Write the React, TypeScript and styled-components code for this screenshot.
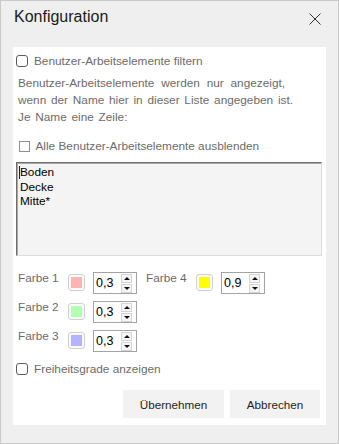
import React from 'react';
import styled, { createGlobalStyle } from 'styled-components';

const GlobalStyle = createGlobalStyle`
  html, body {
    margin: 0;
    padding: 0;
    background: #efefef;
  }
  body {
    font-family: "Liberation Sans", Arial, sans-serif;
  }
  * {
    box-sizing: border-box;
  }
`;

const Window = styled.div`
  width: 339px;
  height: 444px;
  border: 1px solid #c9c9c9;
  background: #efefef;
  display: flex;
  flex-direction: column;
`;

const TitleBar = styled.div`
  height: 46px;
  display: flex;
  align-items: flex-start;
  justify-content: space-between;
  padding: 7px 17px 0 13px;
`;

const Title = styled.div`
  font-size: 16px;
  line-height: 18px;
  color: #1b1b1b;
`;

const CloseButton = styled.div`
  margin-top: 5px;
  width: 12px;
  height: 12px;
  display: flex;
`;

const Panel = styled.div`
  margin: 0 12px;
  height: 378px;
  background: #ffffff;
  display: flex;
  flex-direction: column;
  padding: 0 4px 0 3px;
  font-size: 11.8px;
  color: #6b6b6b;
`;

const CheckRow = styled.label<{ $top: number; $indent?: number }>`
  display: flex;
  align-items: center;
  height: 14px;
  margin-top: ${({ $top }) => $top}px;
  padding-left: ${({ $indent }) => $indent ?? 0}px;
  gap: 6px;
  line-height: 14px;
  white-space: nowrap;
`;

const CheckBox = styled.span<{ $flat?: boolean }>`
  flex: none;
  width: ${({ $flat }) => ($flat ? 11 : 12)}px;
  height: ${({ $flat }) => ($flat ? 11 : 12)}px;
  border: 1px solid ${({ $flat }) => ($flat ? '#8e8e8e' : '#5c5c5c')};
  border-radius: ${({ $flat }) => ($flat ? 0 : 3)}px;
  background: #ffffff;
`;

const Hint = styled.div`
  margin: 6.5px 0 0 2px;
  line-height: 17.35px;
`;

const HintLine = styled.div<{ $justify?: boolean }>`
  white-space: nowrap;
  width: ${({ $justify }) => ($justify ? '267px' : 'auto')};
  text-align: ${({ $justify }) => ($justify ? 'justify' : 'left')};
  text-align-last: ${({ $justify }) => ($justify ? 'justify' : 'left')};
  word-spacing: 1.5px;
`;

const NameList = styled.div`
  margin-top: 9px;
  height: 94px;
  background: #f4f4f4;
  border: 1px solid;
  border-color: #6f6f6f #dcdcdc #dcdcdc #6f6f6f;
  box-shadow: inset 1px 1px 0 #a9a9a9;
  padding: 2px 3px;
  font-size: 11.8px;
  line-height: 14.7px;
  color: #000000;
`;

const ListLine = styled.div`
  position: relative;
`;

const Caret = styled.span`
  position: absolute;
  left: -1px;
  top: 1px;
  width: 1px;
  height: 13px;
  background: #1a1a4a;
`;

const Colors = styled.div`
  margin-top: 16px;
  padding-left: 2px;
  display: flex;
  flex-direction: column;
  gap: 7px;
`;

const ColorRow = styled.div`
  display: flex;
  gap: 9px;
`;

const ColorField = styled.div`
  display: flex;
  align-items: center;
  height: 22px;
`;

const ColorLabel = styled.span`
  align-self: flex-start;
  width: 50px;
  line-height: 13px;
  white-space: nowrap;
`;

const Swatch = styled.span<{ $color: string }>`
  width: 17px;
  height: 17px;
  margin-top: -1px;
  border: 1px solid #d0d0d0;
  border-radius: 3px;
  background: #fbfbfb;
  display: flex;
  align-items: center;
  justify-content: center;

  &::after {
    content: '';
    width: 11px;
    height: 11px;
    background: ${({ $color }) => $color};
  }
`;

const Spinner = styled.div`
  margin-left: 8px;
  width: 44px;
  height: 22px;
  border: 1px solid #a3a3a3;
  background: #ffffff;
  display: flex;
  align-items: center;
  justify-content: space-between;
  padding: 0 4px 0 2px;
`;

const SpinValue = styled.span`
  font-size: 12.5px;
  color: #000000;
`;

const SpinButtons = styled.div`
  display: flex;
  flex-direction: column;
  gap: 1px;
`;

const SpinButton = styled.span<{ $down?: boolean }>`
  width: 11px;
  height: 9px;
  border: 1px solid #d4d4d4;
  background: #f6f6f6;
  display: flex;
  align-items: center;
  justify-content: center;

  &::after {
    content: '';
    border-left: 3px solid transparent;
    border-right: 3px solid transparent;
    ${({ $down }) => ($down ? 'border-top: 3px solid #111;' : 'border-bottom: 3px solid #111;')}
  }
`;

const Buttons = styled.div`
  margin-top: 14px;
  margin-right: 2px;
  display: flex;
  justify-content: flex-end;
  gap: 6px;
`;

const Button = styled.button<{ $width: number }>`
  width: ${({ $width }) => $width}px;
  height: 28px;
  border: none;
  background: #f2f2f2;
  font-family: "Liberation Sans", Arial, sans-serif;
  font-size: 11.7px;
  color: #1e1e1e;
  padding: 0;
`;

type ColorSpec = { label: string; color: string; value: string };

const rows: ColorSpec[][] = [
  [
    { label: 'Farbe 1', color: '#ffb3b3', value: '0,3' },
    { label: 'Farbe 4', color: '#ffff00', value: '0,9' },
  ],
  [{ label: 'Farbe 2', color: '#b3ffb3', value: '0,3' }],
  [{ label: 'Farbe 3', color: '#b3b3ff', value: '0,3' }],
];

const ColorInput: React.FC<ColorSpec> = ({ label, color, value }) => (
  <ColorField>
    <ColorLabel>{label}</ColorLabel>
    <Swatch $color={color} />
    <Spinner>
      <SpinValue>{value}</SpinValue>
      <SpinButtons>
        <SpinButton />
        <SpinButton $down />
      </SpinButtons>
    </Spinner>
  </ColorField>
);

export default function App() {
  return (
    <>
      <GlobalStyle />
      <Window>
        <TitleBar>
          <Title>Konfiguration</Title>
          <CloseButton>
            <svg width="12" height="12" viewBox="0 0 12 12">
              <path d="M0.5 0.5 L11.5 11.5 M11.5 0.5 L0.5 11.5" stroke="#333" strokeWidth="1" fill="none" />
            </svg>
          </CloseButton>
        </TitleBar>
        <Panel>
          <CheckRow $top={7}>
            <CheckBox />
            Benutzer-Arbeitselemente filtern
          </CheckRow>
          <Hint>
            <HintLine $justify>Benutzer-Arbeitselemente werden nur angezeigt,</HintLine>
            <HintLine>wenn der Name hier in dieser Liste angegeben ist.</HintLine>
            <HintLine>Je Name eine Zeile:</HintLine>
          </Hint>
          <CheckRow $top={12.5} $indent={2.5}>
            <CheckBox $flat />
            Alle Benutzer-Arbeitselemente ausblenden
          </CheckRow>
          <NameList>
            <ListLine>
              <Caret />
              Boden
            </ListLine>
            <ListLine>Decke</ListLine>
            <ListLine>Mitte*</ListLine>
          </NameList>
          <Colors>
            {rows.map((row, i) => (
              <ColorRow key={i}>
                {row.map((c) => (
                  <ColorInput key={c.label} {...c} />
                ))}
              </ColorRow>
            ))}
          </Colors>
          <CheckRow $top={10}>
            <CheckBox />
            Freiheitsgrade anzeigen
          </CheckRow>
          <Buttons>
            <Button $width={101}>Übernehmen</Button>
            <Button $width={90}>Abbrechen</Button>
          </Buttons>
        </Panel>
      </Window>
    </>
  );
}
